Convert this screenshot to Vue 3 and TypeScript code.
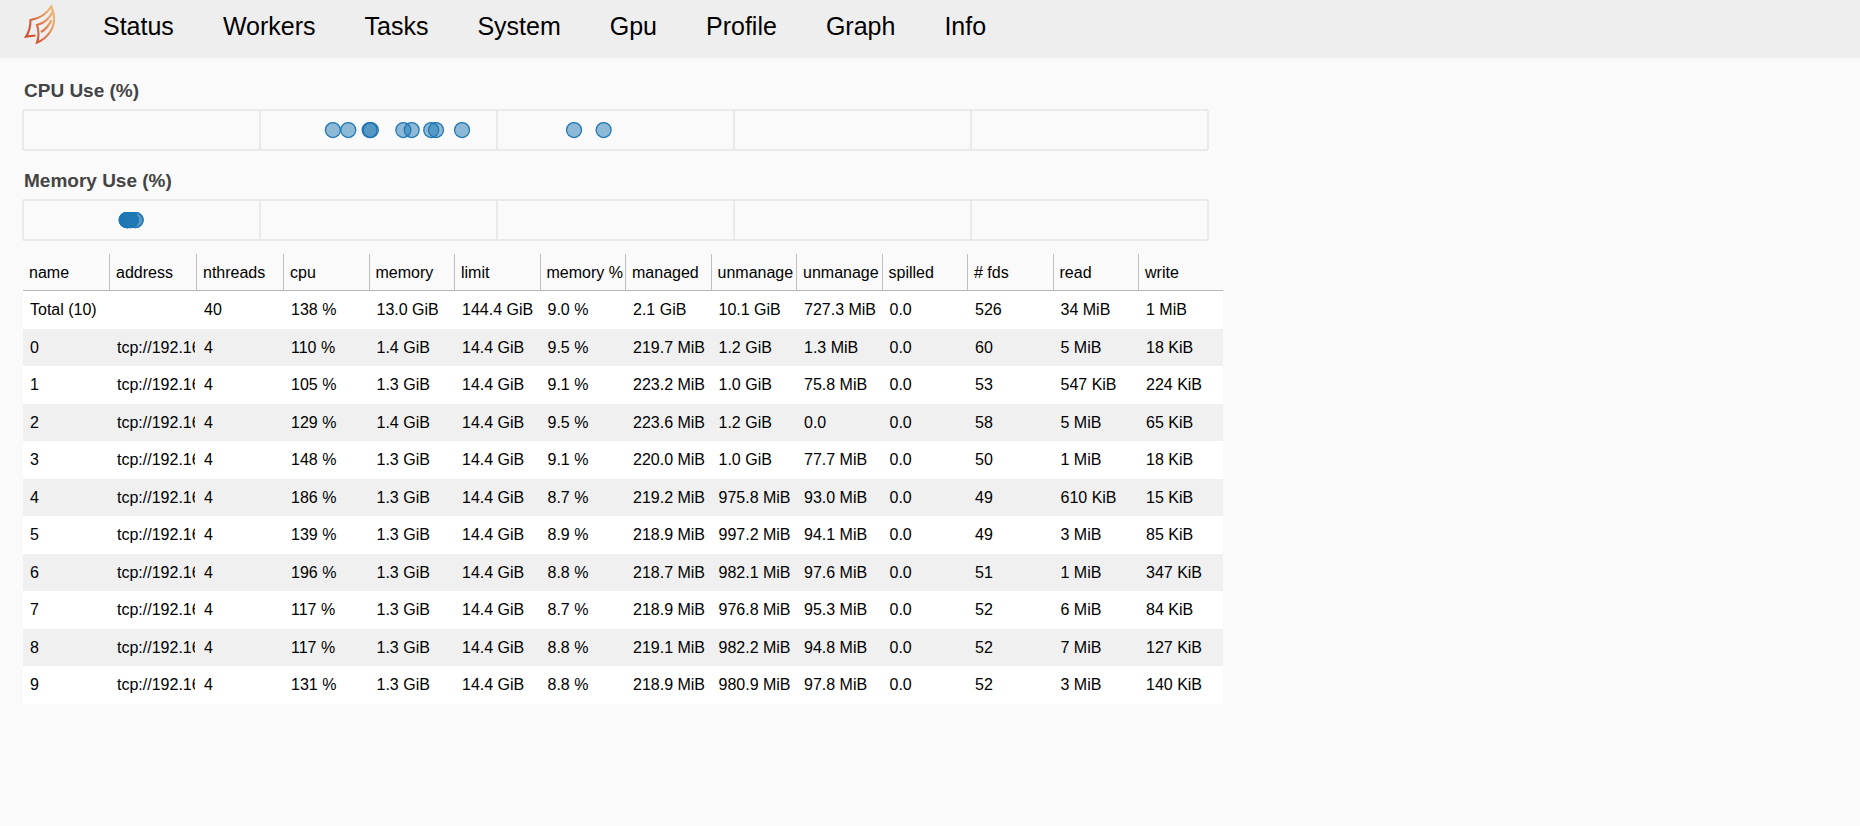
<script setup lang="ts">
const links: string[] = ['Status', 'Workers', 'Tasks', 'System', 'Gpu', 'Profile', 'Graph', 'Info']

interface Plot {
  title: string
  points: number[]
}

// Point positions are shares of the axis length, in percent.
const plots: Plot[] = [
  { title: 'CPU Use (%)', points: [26.15, 27.45, 29.25, 29.35, 32.1, 32.8, 34.45, 34.85, 37.05, 46.5, 49] },
  { title: 'Memory Use (%)', points: [8.75, 8.75, 8.8, 8.8, 8.8, 8.9, 9, 9.1, 9.1, 9.5, 9.5] },
]
const gridLines: number[] = [0, 20, 40, 60, 80, 100]

const columns: string[] = [
  'name', 'address', 'nthreads', 'cpu', 'memory', 'limit', 'memory %',
  'managed', 'unmanage', 'unmanage', 'spilled', '# fds', 'read', 'write',
]

const address = 'tcp://192.16'
const rows: string[][] = [
  ['Total (10)', '', '40', '138 %', '13.0 GiB', '144.4 GiB', '9.0 %', '2.1 GiB', '10.1 GiB', '727.3 MiB', '0.0', '526', '34 MiB', '1 MiB'],
  ['0', address, '4', '110 %', '1.4 GiB', '14.4 GiB', '9.5 %', '219.7 MiB', '1.2 GiB', '1.3 MiB', '0.0', '60', '5 MiB', '18 KiB'],
  ['1', address, '4', '105 %', '1.3 GiB', '14.4 GiB', '9.1 %', '223.2 MiB', '1.0 GiB', '75.8 MiB', '0.0', '53', '547 KiB', '224 KiB'],
  ['2', address, '4', '129 %', '1.4 GiB', '14.4 GiB', '9.5 %', '223.6 MiB', '1.2 GiB', '0.0', '0.0', '58', '5 MiB', '65 KiB'],
  ['3', address, '4', '148 %', '1.3 GiB', '14.4 GiB', '9.1 %', '220.0 MiB', '1.0 GiB', '77.7 MiB', '0.0', '50', '1 MiB', '18 KiB'],
  ['4', address, '4', '186 %', '1.3 GiB', '14.4 GiB', '8.7 %', '219.2 MiB', '975.8 MiB', '93.0 MiB', '0.0', '49', '610 KiB', '15 KiB'],
  ['5', address, '4', '139 %', '1.3 GiB', '14.4 GiB', '8.9 %', '218.9 MiB', '997.2 MiB', '94.1 MiB', '0.0', '49', '3 MiB', '85 KiB'],
  ['6', address, '4', '196 %', '1.3 GiB', '14.4 GiB', '8.8 %', '218.7 MiB', '982.1 MiB', '97.6 MiB', '0.0', '51', '1 MiB', '347 KiB'],
  ['7', address, '4', '117 %', '1.3 GiB', '14.4 GiB', '8.7 %', '218.9 MiB', '976.8 MiB', '95.3 MiB', '0.0', '52', '6 MiB', '84 KiB'],
  ['8', address, '4', '117 %', '1.3 GiB', '14.4 GiB', '8.8 %', '219.1 MiB', '982.2 MiB', '94.8 MiB', '0.0', '52', '7 MiB', '127 KiB'],
  ['9', address, '4', '131 %', '1.3 GiB', '14.4 GiB', '8.8 %', '218.9 MiB', '980.9 MiB', '97.8 MiB', '0.0', '52', '3 MiB', '140 KiB'],
]
</script>

<template>
  <nav class="navbar">
    <a class="logo" href="#" aria-label="Dask">
      <svg width="34" height="42" viewBox="0 0 34 42" fill="none" stroke-width="2.1" stroke-linejoin="miter">
        <defs>
          <linearGradient id="flame" x1="6" y1="30" x2="32" y2="18" gradientUnits="userSpaceOnUse">
            <stop offset="0.1" stop-color="#d2512f" />
            <stop offset="0.6" stop-color="#e28250" />
            <stop offset="1" stop-color="#f0b26e" />
          </linearGradient>
        </defs>
        <path stroke="url(#flame)" d="M12.5 32.5 L3 33.6 Q7.5 27 7.5 17 Q21 15 28.3 3.5 Q34.5 18 27 29 Q22 36.5 14 39.5 Q17 31 14 22 Q24.5 19.5 29.5 9" />
        <path stroke="url(#flame)" d="M18 29 Q25 25 28.5 17" />
      </svg>
    </a>
    <a v-for="link in links" :key="link" class="nav-link" href="#">{{ link }}</a>
  </nav>

  <main class="content">
    <section v-for="plot in plots" :key="plot.title" class="plot">
      <h2>{{ plot.title }}</h2>
      <svg class="chart" role="img" :aria-label="plot.title">
        <g class="grid">
          <line x1="0" y1="1" x2="100%" y2="1" />
          <line x1="0" y1="41" x2="100%" y2="41" />
          <line v-for="g in gridLines" :key="g" :x1="g + '%'" y1="1" :x2="g + '%'" y2="41" />
        </g>
        <circle v-for="(p, i) in plot.points" :key="i" class="point" :cx="p + '%'" cy="21" r="7.5" />
      </svg>
    </section>

    <table>
      <colgroup>
        <col v-for="(c, i) in columns" :key="i" :class="i < 3 ? 'wide' : i < 13 ? 'regular' : 'last'" />
      </colgroup>
      <thead>
        <tr>
          <th v-for="(c, i) in columns" :key="i" scope="col">{{ c }}</th>
        </tr>
      </thead>
      <tbody>
        <tr v-for="row in rows" :key="row[0]">
          <td v-for="(cell, i) in row" :key="i">{{ cell }}</td>
        </tr>
      </tbody>
    </table>
  </main>
</template>

<style>
body {
  margin: 0;
  background: #fafafa;
}
</style>

<style scoped>
.navbar {
  display: flex;
  height: 58px;
  background: #eeeeee;
  font: 25px/52px "Liberation Sans", Arial, sans-serif;
}

.logo {
  width: 55px;
  padding: 3px 0 0 23px;
  line-height: 0;
}

.nav-link {
  padding: 0 24px 0 25px;
  color: #000;
  text-decoration: none;
}

.content {
  max-width: 1200px;
  padding: 20px 23px 0;
  font: 16px/20px "Liberation Sans", Arial, sans-serif;
}

.plot {
  height: 90px;
  padding: 0 15px 0 0;
}

.plot h2 {
  margin: 0;
  padding: 0 0 5px 1px;
  color: #444;
  font-size: 19px;
  line-height: 26px;
}

.chart {
  display: block;
  width: 100%;
  height: 42px;
  overflow: visible;
}

.grid line {
  stroke: #e5e5e5;
  stroke-width: 1.5;
}

.point {
  fill: #1f77b4;
  fill-opacity: 0.5;
  stroke: #1f77b4;
  stroke-width: 1.25;
}

table {
  width: 100%;
  margin-top: -4px;
  table-layout: fixed;
  border-collapse: separate;
  border-spacing: 0;
}

.wide {
  width: 7.25%;
}

.regular {
  width: 7.125%;
}

th,
td {
  box-sizing: border-box;
  overflow: hidden;
  white-space: nowrap;
  text-align: left;
  font-weight: normal;
  color: #000;
}

th {
  height: 37px;
  padding: 1px 0 0 6px;
  border-right: 1px solid #c0c0c0;
  border-bottom: 1px solid #b8b8b8;
}

th:last-child {
  border-right: 0;
}

td {
  height: 38px;
  padding: 0 0 0 7px;
  border-right: 2px solid transparent;
  background: #fff;
}

tbody tr:nth-child(even) td {
  height: 37px;
  background: #f0f0f0;
}
</style>
